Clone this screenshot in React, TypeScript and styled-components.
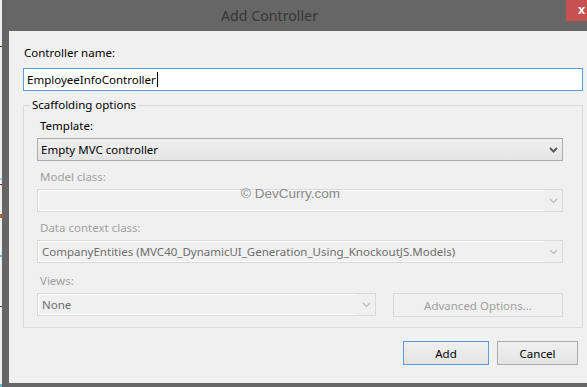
import React from "react";
import styled, { createGlobalStyle } from "styled-components";

const Global = createGlobalStyle`
  html, body { margin: 0; padding: 0; }
  body { width: 587px; height: 387px; overflow: hidden; background: #f2f2f2; font-family: "Segoe UI", "Noto Sans", sans-serif; }
`;

const Page = styled.div`
  display: flex;
  width: 587px;
  height: 387px;
`;

const LeftStrip = styled.div`
  width: 3px;
  background: #eef0f0;
  display: flex;
  flex-direction: column;
`;

const Mark = styled.div<{ $top: number; $color: string; $h?: number }>`
  margin-top: ${(p) => p.$top}px;
  height: ${(p) => p.$h ?? 1}px;
  background: ${(p) => p.$color};
`;

const Window = styled.div`
  flex: 1;
  display: flex;
  flex-direction: column;
  background: #666666;
  position: relative;
`;

const TitleBar = styled.div`
  height: 31px;
  display: flex;
  align-items: center;
  justify-content: center;
  padding-right: 50px;
  box-sizing: border-box;
  color: #363636;
  font-size: 14.2px;
  font-family: "Noto Sans", sans-serif;
`;

const CloseButton = styled.div`
  position: absolute;
  top: 0;
  right: 0;
  width: 21px;
  height: 21px;
  background: #c75050;
  color: #ffffff;
  font: bold 13px "Liberation Sans", Arial, sans-serif;
  line-height: 19px;
  padding-left: 12px;
  box-sizing: border-box;
`;

const Client = styled.div`
  margin-left: 7px;
  height: 352px;
  background: #f0f0f0;
  display: flex;
  flex-direction: column;
  padding: 14px 4px 0 14px;
  box-sizing: border-box;
  position: relative;
  font-family: "Noto Sans", sans-serif;
  font-size: 11.5px;
`;

const Label = styled.div<{ $disabled?: boolean; $mt?: number }>`
  height: 16px;
  line-height: 16px;
  padding-left: 1px;
  margin-top: ${(p) => p.$mt ?? 0}px;
  color: ${(p) => (p.$disabled ? "#a0a0a0" : "#000000")};
`;

const TextInput = styled.div`
  margin-top: 7px;
  height: 23px;
  border: 1px solid #569de5;
  background: #ffffff;
  box-sizing: border-box;
  display: flex;
  align-items: center;
  padding-left: 3px;
  color: #000;
`;

const Caret = styled.span`
  display: inline-block;
  width: 1px;
  height: 15px;
  background: #000;
  margin-left: 1px;
`;

const Group = styled.fieldset`
  margin: 6px 0 0 0;
  padding: 5px 19px 0 13px;
  border: 1px solid #dcdcdc;
  height: 231px;
  box-sizing: border-box;
  display: flex;
  flex-direction: column;
  min-width: 0;
`;

const Legend = styled.legend`
  padding: 0 2px;
  margin-left: -7px;
  line-height: 16px;
  color: #000;
`;

const FieldLabel = styled(Label)`
  padding-left: 3px;
`;

const Select = styled.div<{ $disabled?: boolean; $width?: number }>`
  margin-top: 4px;
  height: 23px;
  box-sizing: border-box;
  border: 1px solid ${(p) => (p.$disabled ? "#d9d9d9" : "#acacac")};
  background: ${(p) =>
    p.$disabled ? "#f0f0f0" : "linear-gradient(#f0f0f0, #e5e5e5)"};
  display: flex;
  align-items: stretch;
  color: ${(p) => (p.$disabled ? "#6d6d6d" : "#000")};
  ${(p) => (p.$width ? `width: ${p.$width}px;` : "")}
`;

const SelectValue = styled.div<{ $disabled?: boolean }>`
  flex: 1;
  display: flex;
  align-items: center;
  padding-left: 3px;
  white-space: nowrap;
  overflow: hidden;
  ${(p) => (p.$disabled ? "border: 1px solid #ffffff; border-right: none;" : "")}
`;

const Arrow = styled.div`
  width: 18px;
  display: flex;
  align-items: center;
  justify-content: center;
`;

const Row = styled.div`
  display: flex;
  align-items: flex-start;
  gap: 17px;
`;

const Button = styled.div<{ $primary?: boolean; $disabled?: boolean; $width: number }>`
  width: ${(p) => p.$width}px;
  height: 24px;
  box-sizing: border-box;
  border: 1px solid
    ${(p) => (p.$primary ? "#569de5" : p.$disabled ? "#d9d9d9" : "#acacac")};
  background: ${(p) =>
    p.$disabled ? "#f0f0f0" : "linear-gradient(#f0f0f0, #e5e5e5)"};
  color: ${(p) => (p.$disabled ? "#a0a0a0" : "#000")};
  display: flex;
  align-items: center;
  justify-content: center;
`;

const AdvancedButton = styled(Button)`
  margin-top: 4px;
`;

const Footer = styled.div`
  margin-top: 13px;
  display: flex;
  justify-content: flex-end;
  gap: 8px;
  padding-right: 5px;
`;

const Watermark = styled.div`
  position: absolute;
  left: 232px;
  top: 155px;
  color: #8a8a8a;
  font: 13.5px "Liberation Sans", Arial, sans-serif;
`;

const Chevron = ({ disabled }: { disabled?: boolean }) => (
  <svg width="9" height="6" viewBox="0 0 9 6">
    <polyline
      points="1,1 4.5,4.5 8,1"
      fill="none"
      stroke={disabled ? "#bcbcbc" : "#5a5a5a"}
      strokeWidth={disabled ? 1.2 : 2}
    />
  </svg>
);

export default function App() {
  return (
    <Page>
      <Global />
      <LeftStrip>
        <Mark $top={46} $color="#8b2020" />
        <Mark $top={131} $color="#9fd2d8" $h={2} />
        <Mark $top={4} $color="#8b2020" />
        <Mark $top={29} $color="#c0601a" $h={4} />
        <Mark $top={37} $color="#6ab8c8" $h={2} />
        <Mark $top={49} $color="#8b2020" />
        <Mark $top={77} $color="#6ab8c8" $h={3} />
      </LeftStrip>
      <Window>
        <TitleBar>Add Controller</TitleBar>
        <CloseButton>x</CloseButton>
        <Client>
          <Label>Controller name:</Label>
          <TextInput>
            EmployeeInfoController
            <Caret />
          </TextInput>
          <Group>
            <Legend>Scaffolding options</Legend>
            <FieldLabel>Template:</FieldLabel>
            <Select>
              <SelectValue>Empty MVC controller</SelectValue>
              <Arrow>
                <Chevron />
              </Arrow>
            </Select>
            <FieldLabel $disabled $mt={8}>
              Model class:
            </FieldLabel>
            <Select $disabled>
              <SelectValue $disabled></SelectValue>
              <Arrow>
                <Chevron disabled />
              </Arrow>
            </Select>
            <FieldLabel $disabled $mt={8}>
              Data context class:
            </FieldLabel>
            <Select $disabled>
              <SelectValue $disabled>
                CompanyEntities (MVC40_DynamicUI_Generation_Using_KnockoutJS.Models)
              </SelectValue>
              <Arrow>
                <Chevron disabled />
              </Arrow>
            </Select>
            <FieldLabel $disabled $mt={10}>
              Views:
            </FieldLabel>
            <Row>
              <Select $disabled $width={339}>
                <SelectValue $disabled>None</SelectValue>
                <Arrow>
                  <Chevron disabled />
                </Arrow>
              </Select>
              <AdvancedButton $disabled $width={170}>
                Advanced Options...
              </AdvancedButton>
            </Row>
          </Group>
          <Footer>
            <Button $primary $width={86}>
              Add
            </Button>
            <Button $width={81}>Cancel</Button>
          </Footer>
          <Watermark>© DevCurry.com</Watermark>
        </Client>
      </Window>
    </Page>
  );
}
